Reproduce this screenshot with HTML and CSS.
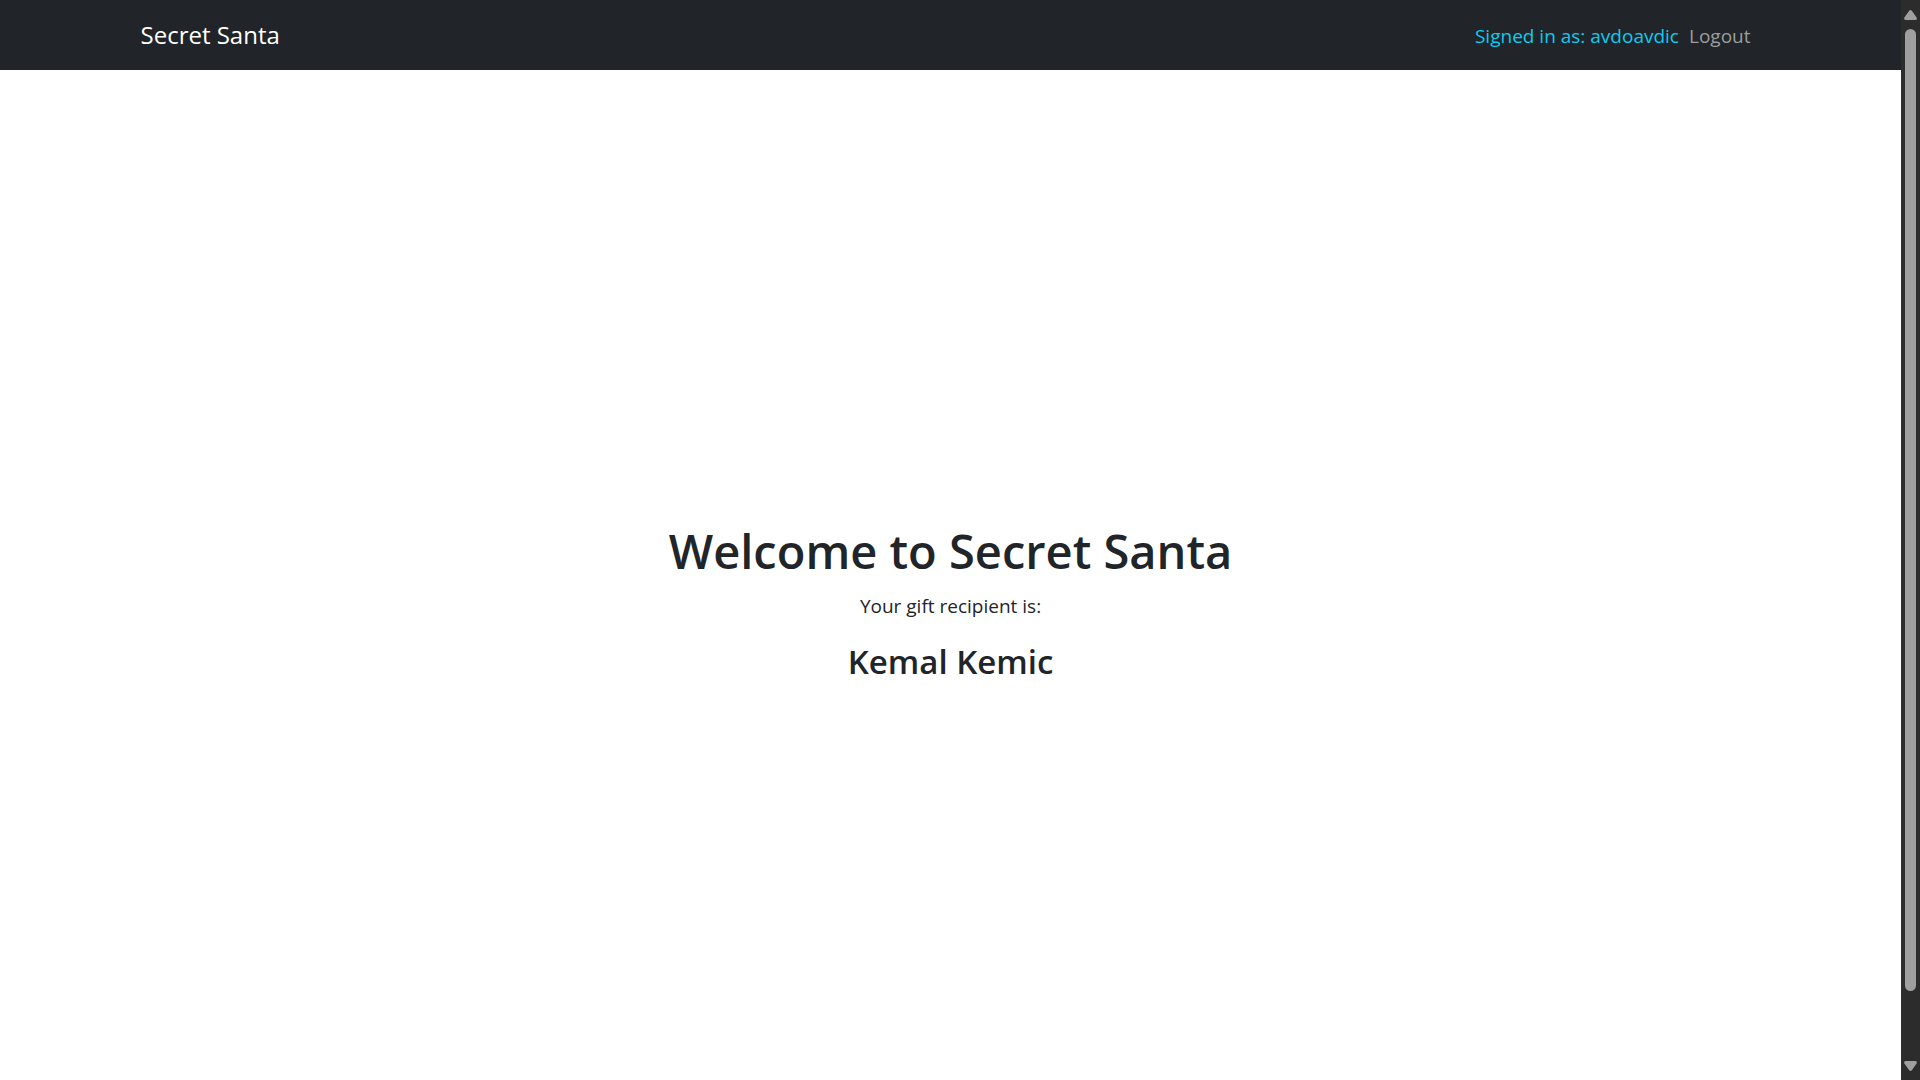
FILE: index.html
```html
<!DOCTYPE html>
<html lang="en">
<head>
  <meta charset="utf-8">
  <meta name="viewport" content="width=device-width, initial-scale=1">
  <title>Secret Santa</title>
  <link rel="stylesheet" href="styles.css">
</head>
<body>
  <div class="page">
    <header class="navbar">
      <nav class="container">
        <a class="brand" href="#">Secret Santa</a>
        <div class="nav-links">
          <span class="user">Signed in as: avdoavdic</span>
          <a class="logout" href="#">Logout</a>
        </div>
      </nav>
    </header>
    <main class="welcome">
      <h1 class="title">Welcome to Secret Santa</h1>
      <p class="lead">Your gift recipient is:</p>
      <h3 class="recipient">Kemal Kemic</h3>
    </main>
  </div>
  <div class="scrollbar" aria-hidden="true">
    <svg class="arrow" width="13" height="10" viewBox="0 0 13 10"><path d="M5 1Q6.500-1 8 1L12.600 7.500Q13.500 10 11 10H2Q-.5 10 .4 7.500Z"/></svg>
    <div class="track"><div class="thumb"></div></div>
    <svg class="arrow" width="13" height="10" viewBox="0 0 13 10"><path d="M5 9Q6.500 11 8 9L12.600 2.500Q13.500 0 11 0H2Q-.5 0 .4 2.500Z"/></svg>
  </div>
</body>
</html>
```
FILE: styles.css
```css
*, *::before, *::after {
  box-sizing: border-box;
}

body {
  display: flex;
  height: 100vh;
  margin: 0;
  overflow: hidden;
  background: #fff;
  color: #212529;
  font-family: "Segoe UI", "Open Sans", "Noto Sans", sans-serif;
  font-size: 19px;
  line-height: 30px;
}

.page {
  flex: 1;
  min-width: 0;
  overflow: hidden;
}

.navbar {
  padding: 10px 0;
  background: #212529;
}

.container {
  display: flex;
  align-items: center;
  justify-content: space-between;
  max-width: 1650px;
  min-height: 50px;
  margin: 0 auto;
  padding: 0 15px;
}

.brand {
  color: #fff;
  font-size: 24px;
  line-height: 38px;
  text-decoration: none;
}

.nav-links {
  display: flex;
  gap: 10px;
  padding: 2px 10px 0 0;
}

.user {
  color: #0dcaf0;
}

.logout {
  color: #9b9d9e;
  text-decoration: none;
}

.welcome {
  display: flex;
  flex-direction: column;
  align-items: center;
  justify-content: center;
  min-height: 100vh;
  text-align: center;
}

.title {
  margin: 0 0 10px;
  font-size: 47px;
  font-weight: 600;
  line-height: 60px;
}

.lead {
  margin: 0 0 20px;
}

.recipient {
  margin: 0 0 16px;
  font-size: 33px;
  font-weight: 600;
  line-height: 42px;
}

.scrollbar {
  display: flex;
  flex: none;
  flex-direction: column;
  align-items: center;
  gap: 9px;
  width: 19px;
  padding: 10px 0 9px;
  background: #2c2c2c;
}

.arrow {
  display: block;
  flex: none;
  fill: #9f9f9f;
}

.track {
  flex: 1;
  width: 11px;
}

.thumb {
  height: 94%;
  border-radius: 6px;
  background: #9f9f9f;
}
```
